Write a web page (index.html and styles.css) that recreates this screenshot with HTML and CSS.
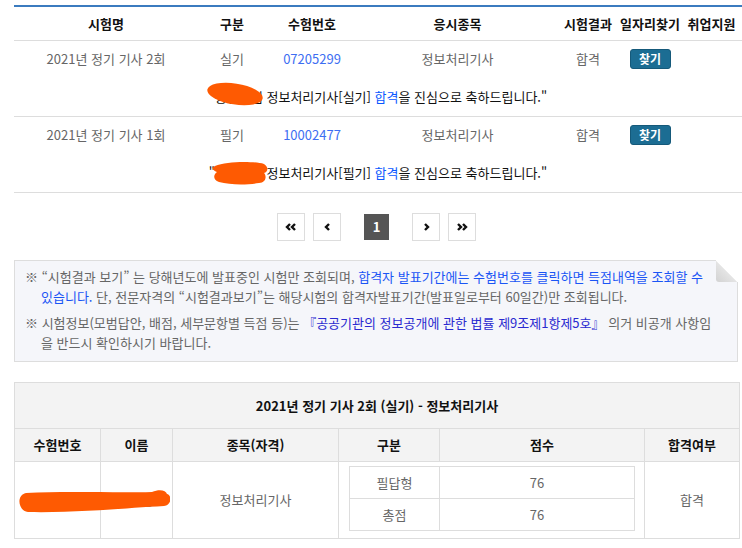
FILE: index.html
```html
<!DOCTYPE html>
<html lang="ko">
<head>
  <meta charset="UTF-8" />
  <title>시험결과 조회</title>
  <link rel="stylesheet" href="styles.css">
</head>
<body>

<div class="page">

  <table class="result-list">
    <colgroup>
      <col class="c-name">
      <col class="c-type">
      <col class="c-no">
      <col class="c-subj">
      <col class="c-res">
      <col class="c-job">
      <col class="c-sup">
    </colgroup>
    <thead>
      <tr>
        <th>시험명</th>
        <th>구분</th>
        <th>수험번호</th>
        <th>응시종목</th>
        <th>시험결과</th>
        <th>일자리찾기</th>
        <th>취업지원</th>
      </tr>
    </thead>
    <tbody>
      <tr class="exam-row">
        <td>2021년 정기 기사 2회</td>
        <td>실기</td>
        <td><a href="#" class="exam-no">07205299</a></td>
        <td>정보처리기사</td>
        <td>합격</td>
        <td><button class="btn-find">찾기</button></td>
        <td></td>
      </tr>
      <tr class="msg-row">
        <td colspan="7">
          <span class="redact">"홍길동님<svg class="blob" viewBox="0 0 58 24" width="58" height="24"><ellipse cx="29" cy="12" rx="28" ry="10.5" transform="rotate(9 29 12)" fill="#fe5a02"/></svg></span>
          정보처리기사[실기] <span class="pass">합격</span>을 진심으로 축하드립니다."
        </td>
      </tr>
      <tr class="exam-row">
        <td>2021년 정기 기사 1회</td>
        <td>필기</td>
        <td><a href="#" class="exam-no">10002477</a></td>
        <td>정보처리기사</td>
        <td>합격</td>
        <td><button class="btn-find">찾기</button></td>
        <td></td>
      </tr>
      <tr class="msg-row">
        <td colspan="7">
          <span class="redact">"홍길동님<svg class="blob blob-2" viewBox="0 0 56 24" width="56" height="24"><path d="M3 5 C15 0, 42 0, 52 3 C57 6, 56 11, 52 12 C55 15, 54 22, 47 22 C35 24, 18 24, 7 21 C1 19, 1 14, 5 11 C0 9, 0 6, 3 5 Z" fill="#fe5a02"/></svg></span>
          정보처리기사[필기] <span class="pass">합격</span>을 진심으로 축하드립니다."
        </td>
      </tr>
    </tbody>
  </table>

  <div class="paging">
    <a href="#" class="pg">
      <svg viewBox="0 0 12 8" width="12" height="8"><path d="M5 1 L2 4 L5 7 M10 1 L7 4 L10 7" stroke="#111" stroke-width="2.4" fill="none"/></svg>
    </a>
    <a href="#" class="pg">
      <svg viewBox="0 0 7 8" width="7" height="8"><path d="M5 1 L2 4 L5 7" stroke="#111" stroke-width="2.4" fill="none"/></svg>
    </a>
    <span class="pg-current">1</span>
    <a href="#" class="pg">
      <svg viewBox="0 0 7 8" width="7" height="8"><path d="M2 1 L5 4 L2 7" stroke="#111" stroke-width="2.4" fill="none"/></svg>
    </a>
    <a href="#" class="pg">
      <svg viewBox="0 0 12 8" width="12" height="8"><path d="M2 1 L5 4 L2 7 M7 1 L10 4 L7 7" stroke="#111" stroke-width="2.4" fill="none"/></svg>
    </a>
  </div>

  <div class="notice">
    <p>※ “시험결과 보기” 는 당해년도에 발표중인 시험만 조회되며, <span class="note-link">합격자 발표기간에는 수험번호를 클릭하면 득점내역을 조회할 수<br>있습니다.</span> 단, 전문자격의 “시험결과보기”는 해당시험의 합격자발표기간(발표일로부터 60일간)만 조회됩니다.</p>
    <p>※ 시험정보(모범답안, 배점, 세부문항별 득점 등)는 <span class="law">『공공기관의 정보공개에 관한 법률 제9조제1항제5호』</span> 의거 비공개 사항임<br>을 반드시 확인하시기 바랍니다.</p>
  </div>

  <table class="score-table">
    <colgroup>
      <col class="s-no">
      <col class="s-name">
      <col class="s-subj">
      <col class="s-type">
      <col class="s-score">
      <col class="s-pass">
    </colgroup>
    <thead>
      <tr>
        <th colspan="6" class="score-title">2021년 정기 기사 2회 (실기) - 정보처리기사</th>
      </tr>
      <tr>
        <th>수험번호</th>
        <th>이름</th>
        <th>종목(자격)</th>
        <th>구분</th>
        <th>점수</th>
        <th>합격여부</th>
      </tr>
    </thead>
    <tbody>
      <tr>
        <td class="hidden-cell">07205299<svg class="blob blob-3" viewBox="0 0 154 24" width="154" height="24"><path d="M10 3 C50 1, 100 3, 136 2 C143 -1, 150 0, 151 4 C156 5, 156 15, 148 16 C110 18, 60 23, 12 22 C2 21, 0 5, 10 3 Z" fill="#fe5a02"/></svg></td>
        <td>홍길동</td>
        <td>정보처리기사</td>
        <td colspan="2" class="inner-wrap">
          <table class="score-inner">
            <colgroup>
              <col class="i-type">
              <col class="i-score">
            </colgroup>
            <tr>
              <td>필답형</td>
              <td>76</td>
            </tr>
            <tr>
              <td>총점</td>
              <td>76</td>
            </tr>
          </table>
        </td>
        <td>합격</td>
      </tr>
    </tbody>
  </table>

</div>

</body>
</html>
```

FILE: styles.css
```css
* {
  margin: 0;
  padding: 0;
  box-sizing: border-box;
}

body {
  font-family: "Noto Sans CJK KR", sans-serif;
  font-size: 13px;
  color: #666;
  background: #fff;
}

a {
  text-decoration: none;
  color: inherit;
}

.page {
  width: 739px;
  padding: 5px 0 0 14px;
}

/* Result list */

.result-list {
  width: 728px;
  border-collapse: collapse;
  table-layout: fixed;
}

.c-name { width: 184px; }
.c-type { width: 68px; }
.c-no { width: 92px; }
.c-subj { width: 199px; }
.c-res { width: 62px; }
.c-job { width: 62px; }
.c-sup { width: 61px; }

.result-list th {
  height: 34px;
  font-weight: bold;
  color: #111;
  border-top: 2px solid #3b7bbf;
  border-bottom: 1px solid #ddd;
  white-space: nowrap;
}

.result-list td {
  text-align: center;
  vertical-align: middle;
}

.exam-row td {
  height: 37px;
}

.msg-row td {
  height: 39px;
  color: #111;
  border-bottom: 1px solid #ddd;
}

.exam-no {
  color: #3d6ef2;
}

.pass {
  color: #0a58ff;
}

.redact {
  position: relative;
}

.blob {
  position: absolute;
  left: -3px;
  top: 50%;
  transform: translateY(-50%);
  margin-top: -2px;
}

.blob-2 {
  left: 3px;
  margin-top: 1px;
}

.btn-find {
  width: 41px;
  height: 20px;
  background: #1c6d93;
  border: 1px solid #15597a;
  border-radius: 3px;
  color: #fff;
  font-family: inherit;
  font-size: 12px;
  font-weight: bold;
  cursor: pointer;
}

/* Paging */

.paging {
  display: flex;
  justify-content: center;
  align-items: center;
  gap: 8px;
  margin-top: 20px;
}

.pg {
  width: 28px;
  height: 28px;
  border: 1px solid #ddd;
  display: flex;
  align-items: center;
  justify-content: center;
}

.pg-current {
  width: 25px;
  height: 26px;
  margin: 0 15px;
  background: #555;
  color: #fff;
  font-weight: bold;
  display: flex;
  align-items: center;
  justify-content: center;
}

/* Notice */

.notice {
  position: relative;
  margin-top: 19px;
  width: 724px;
  padding: 6px 8px 8px 10px;
  background: #f5f6fa;
  border: 1px solid #ddd;
  line-height: 20px;
  color: #666;
}

.notice::before {
  content: '';
  position: absolute;
  top: -1px;
  right: -1px;
  width: 22px;
  height: 22px;
  background: linear-gradient(225deg, #fff 50%, #e4e4e4 53%, #d2d2d2 100%);
  border-bottom-left-radius: 3px;
}

.notice p {
  padding-left: 16px;
  text-indent: -16px;
}

.notice p + p {
  margin-top: 6px;
}

.note-link {
  color: #1a55f5;
}

.law {
  color: #2a2ad0;
}

/* Score table */

.score-table {
  width: 725px;
  margin-top: 20px;
  border-collapse: collapse;
  table-layout: fixed;
}

.s-no { width: 86px; }
.s-name { width: 72px; }
.s-subj { width: 166px; }
.s-type { width: 101px; }
.s-score { width: 205px; }
.s-pass { width: 95px; }

.score-table th {
  height: 33px;
  background: #f3f3f3;
  border: 1px solid #ddd;
  font-weight: bold;
  color: #111;
}

.score-table th.score-title {
  height: 46px;
}

.score-table td {
  border: 1px solid #ddd;
  text-align: center;
  vertical-align: middle;
  height: 77px;
}

.hidden-cell {
  position: relative;
}

.blob-3 {
  left: 1px;
  top: 28px;
  transform: none;
  margin-top: 0;
  z-index: 1;
}

.score-table td.inner-wrap {
  padding: 4px 9px 6px 10px;
}

.score-inner {
  width: 100%;
  border-collapse: collapse;
  table-layout: fixed;
}

.i-type { width: 90px; }

.score-table .score-inner td {
  height: 32px;
  border: 1px solid #ddd;
}
```
